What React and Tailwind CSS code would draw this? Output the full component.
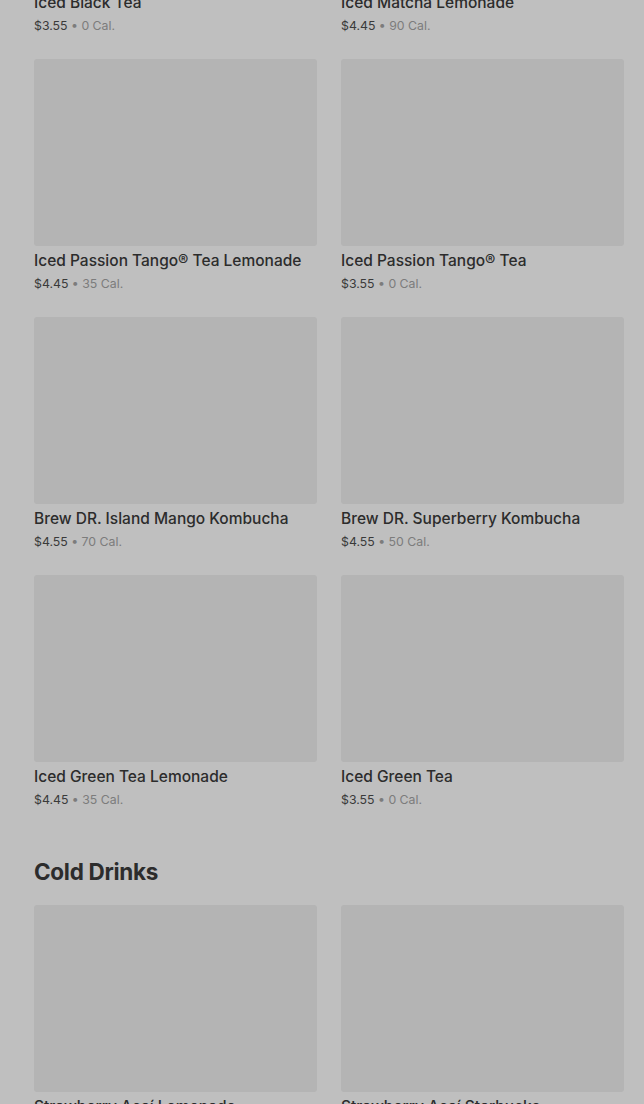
import React from 'react';

const rows = [
  [
    { name: 'Iced Black Tea', price: '$3.55', cal: '0 Cal.' },
    { name: 'Iced Matcha Lemonade', price: '$4.45', cal: '90 Cal.' },
  ],
  [
    { name: 'Iced Passion Tango® Tea Lemonade', price: '$4.45', cal: '35 Cal.' },
    { name: 'Iced Passion Tango® Tea', price: '$3.55', cal: '0 Cal.' },
  ],
  [
    { name: 'Brew DR. Island Mango Kombucha', price: '$4.55', cal: '70 Cal.' },
    { name: 'Brew DR. Superberry Kombucha', price: '$4.55', cal: '50 Cal.' },
  ],
  [
    { name: 'Iced Green Tea Lemonade', price: '$4.45', cal: '35 Cal.' },
    { name: 'Iced Green Tea', price: '$3.55', cal: '0 Cal.' },
  ],
];

const coldDrinks = [
  { name: 'Strawberry Açaí Lemonade', price: '$4.45', cal: '140 Cal.' },
  { name: 'Strawberry Açaí Starbucks Refreshers®', price: '$4.25', cal: '100 Cal.' },
];

function Card({ item }) {
  return (
    <div className="flex flex-col">
      <div className="h-[187px] rounded-[3px] bg-[#b4b4b4]" />
      <div className="mt-[5px] text-[15.5px] leading-[20px] font-medium text-[#2c2c2c]">{item.name}</div>
      <div className="mt-[4px] text-[12.3px] leading-[18px]">
        <span className="text-[#3a3a3a]">{item.price}</span>
        <span className="text-[#7c7c7c]"> • {item.cal}</span>
      </div>
    </div>
  );
}

export default function App() {
  return (
    <div className="h-[1104px] overflow-hidden bg-[#bfbfbf]" style={{ fontFamily: 'Inter, "Noto Sans", sans-serif' }}>
      <div className="-mt-[199px] pl-[34px] pr-[20px]">
        <div className="flex flex-col gap-[24px]">
          {rows.map((row, i) => (
            <div key={i} className="grid grid-cols-2 gap-x-[24px]">
              {row.map((item) => (
                <Card key={item.name} item={item} />
              ))}
            </div>
          ))}
        </div>
        <h2 className="mt-[48px] text-[22.5px] leading-[30px] font-bold text-[#2c2c2c] tracking-[-0.3px]">Cold Drinks</h2>
        <div className="mt-[18px] grid grid-cols-2 gap-x-[24px]">
          {coldDrinks.map((item) => (
            <Card key={item.name} item={item} />
          ))}
        </div>
      </div>
    </div>
  );
}
